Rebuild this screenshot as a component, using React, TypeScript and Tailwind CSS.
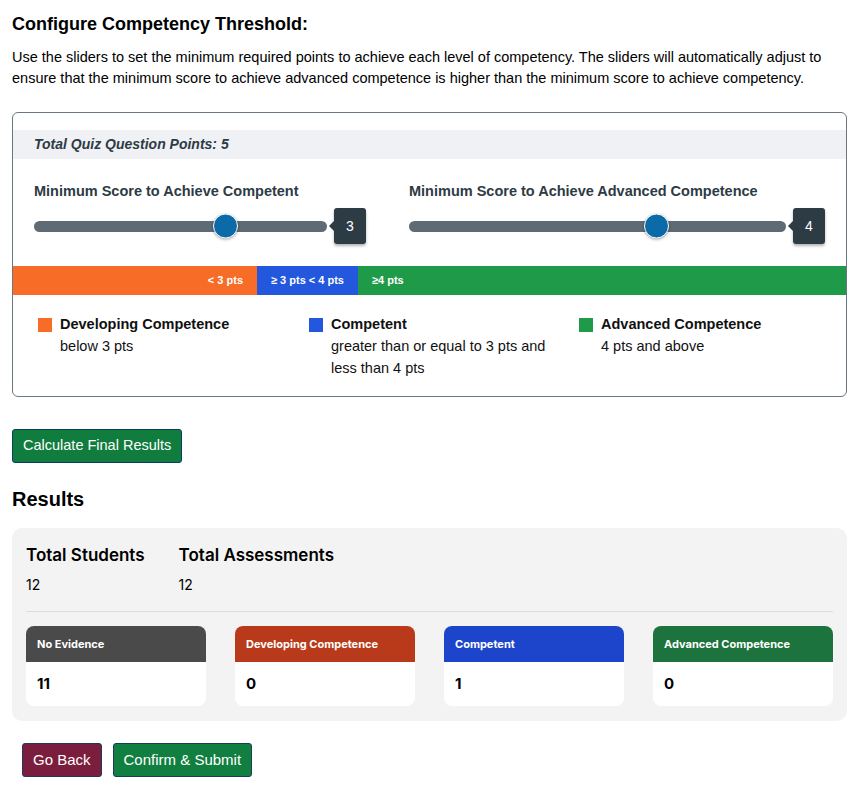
const sans = "font-['Liberation_Sans',Arial,sans-serif]"
const inter = "font-['Inter',sans-serif]"

function Slider({ value, track }: { value: number; track: string }) {
    return (
        <div className="flex items-center h-[36px]">
            <div className={`relative h-[11px] rounded-full bg-[#5f6b74] ${track}`}>
                <div className="absolute top-1/2 left-[calc((100%-25px)*0.667)] h-[25px] w-[25px] -translate-y-1/2 rounded-full border border-white bg-[#0b6aa8] shadow-[0_1px_3px_rgba(0,0,0,0.35)]" />
            </div>
            {/* value tooltip */}
            <div className="relative ml-[7px] flex h-[36px] w-[32px] items-center justify-center rounded-[3px] bg-[#2d3b45] text-[14px] text-white shadow-[0_2px_3px_rgba(0,0,0,0.3)]">
                <span className="absolute -left-[5px] top-1/2 h-0 w-0 -translate-y-1/2 border-y-[5px] border-r-[5px] border-y-transparent border-r-[#2d3b45]" />
                {value}
            </div>
        </div>
    )
}

function Legend({ color, title, lines }: { color: string; title: string; lines: string[] }) {
    return (
        <div className="flex gap-2">
            <div className={`mt-[4px] h-[14px] w-[14px] shrink-0 ${color}`} />
            <div className="text-[14.5px] leading-[21px] text-[#111]">
                <div className="font-bold">{title}</div>
                {lines.map((l) => (
                    <div key={l} className="leading-[22px]">{l}</div>
                ))}
            </div>
        </div>
    )
}

const cards = [
    { label: 'No Evidence', count: 11, bg: 'bg-[#4a4a4a]' },
    { label: 'Developing Competence', count: 0, bg: 'bg-[#b93a1b]' },
    { label: 'Competent', count: 1, bg: 'bg-[#1d45cb]' },
    { label: 'Advanced Competence', count: 0, bg: 'bg-[#1d733d]' },
]

export default function App() {
    return (
        <div className={`${sans} min-h-screen bg-white pl-3 pr-5 pt-[10px] pb-4 text-black`}>
            <h1 className="text-[18px] font-bold leading-[28px]">Configure Competency Threshold:</h1>
            <p className="mt-[9px] text-[14.5px] leading-[21px]">
                Use the sliders to set the minimum required points to achieve each level of competency. The sliders will automatically adjust to ensure that the minimum score to achieve advanced competence is higher than the minimum score to achieve competency.
            </p>

            {/* Threshold box */}
            <div className="mt-[23px] overflow-hidden rounded-md border border-[#6b7780] pt-[17px]">
                <div className="flex h-[29px] items-center bg-[#f0f1f4] px-[21px] text-[14px] font-bold italic text-[#2d3b45]">
                    Total Quiz Question Points: 5
                </div>

                <div className="flex px-[21px] pt-[22px] pb-[22px]">
                    <div className="w-[375px] shrink-0">
                        <div className="text-[14.5px] font-bold leading-[20px] text-[#2d3b45]">Minimum Score to Achieve Competent</div>
                        <div className="mt-[7px]">
                            <Slider value={3} track="w-[293px]" />
                        </div>
                    </div>
                    <div className="flex-1">
                        <div className="text-[14.5px] font-bold leading-[20px] text-[#2d3b45]">Minimum Score to Achieve Advanced Competence</div>
                        <div className="mt-[7px]">
                            <Slider value={4} track="w-[377px]" />
                        </div>
                    </div>
                </div>

                {/* range bar */}
                <div className="flex h-[29px] text-[11px] font-bold text-white">
                    <div className="flex w-[244px] items-center justify-end bg-[#f76c27] pr-[14px]">&lt; 3 pts</div>
                    <div className="flex w-[101px] items-center justify-center bg-[#2357de]">≥ 3 pts &lt; 4 pts</div>
                    <div className="flex flex-1 items-center bg-[#1e9a48] pl-[14px]">≥4 pts</div>
                </div>

                <div className="grid grid-cols-[271px_270px_1fr] pl-[25px] pt-[19px] pb-[17px]">
                    <Legend color="bg-[#f76c27]" title="Developing Competence" lines={['below 3 pts']} />
                    <Legend color="bg-[#2357de]" title="Competent" lines={['greater than or equal to 3 pts and', 'less than 4 pts']} />
                    <Legend color="bg-[#1e9a48]" title="Advanced Competence" lines={['4 pts and above']} />
                </div>
            </div>

            <button className="mt-[32px] h-[34px] rounded-[3px] border border-[#0b3d63] bg-[#107c3d] px-[10px] text-[14.5px] text-white">
                Calculate Final Results
            </button>

            <h2 className="mt-[22px] text-[20px] font-bold leading-[28px]">Results</h2>

            {/* Results panel */}
            <div className={`${inter} mt-[15px] rounded-[10px] bg-[#f3f3f3] px-[14px] pt-[15px] pb-[15px]`}>
                <div className="flex gap-[34px]">
                    <div>
                        <div className="text-[17px] font-semibold leading-[24px]">Total Students</div>
                        <div className="mt-[8px] text-[14px] leading-[20px]">12</div>
                    </div>
                    <div>
                        <div className="text-[17px] font-semibold leading-[24px]">Total Assessments</div>
                        <div className="mt-[8px] text-[14px] leading-[20px]">12</div>
                    </div>
                </div>
                <div className="mt-[16px] border-t border-[#dddddd]" />
                <div className="mt-[14px] grid grid-cols-4 gap-[29px]">
                    {cards.map((c) => (
                        <div key={c.label} className="overflow-hidden rounded-lg bg-white">
                            <div className={`flex h-[36px] items-center px-[11px] text-[11px] font-bold text-white ${c.bg}`}>{c.label}</div>
                            <div className="flex h-[44px] items-center px-[11px] text-[15px] font-bold">{c.count}</div>
                        </div>
                    ))}
                </div>
            </div>

            <div className="mt-[22px] flex gap-[11px] pl-[10px]">
                <button className="h-[34px] rounded-[3px] border border-[#1a3b5c] bg-[#7b1e3d] px-[10px] text-[15px] text-white">Go Back</button>
                <button className="h-[34px] rounded-[3px] border border-[#1a3b5c] bg-[#117f3f] px-[10px] text-[15px] text-white">Confirm &amp; Submit</button>
            </div>
        </div>
    )
}
